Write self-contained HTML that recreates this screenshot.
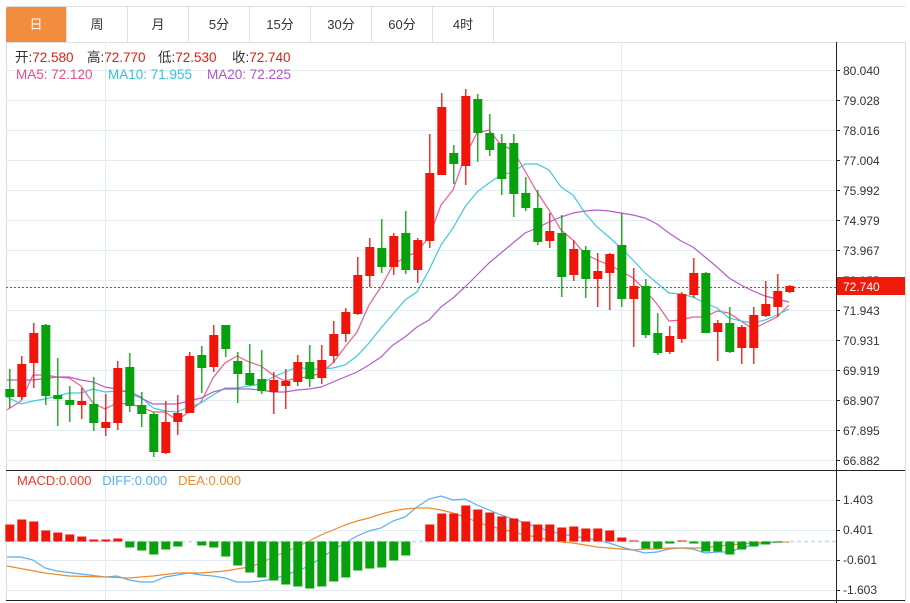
<!DOCTYPE html>
<html><head><meta charset="utf-8"><style>
body{margin:0;background:#fff;width:910px;height:603px;overflow:hidden;font-family:"Liberation Sans","Noto Sans CJK SC",sans-serif;}
.tabs{position:absolute;left:6px;top:6px;height:35px;width:899px;border-top:1px solid #e0e0e0;border-bottom:1px solid #e0e0e0;}
.tab{position:absolute;top:0;height:35px;width:60px;border-right:1px solid #e0e0e0;text-align:center;line-height:35px;font-size:13px;color:#333;}
.tab.on{background:#f28c3f;color:#fff;border-radius:2px 0 0 0;}
.leg{position:absolute;font-size:13.5px;line-height:16px;white-space:nowrap;}
svg{position:absolute;left:0;top:0;}
</style></head><body>
<div class="tabs">
<div class="tab on" style="left:0">日</div>
<div class="tab" style="left:61px">周</div>
<div class="tab" style="left:122px">月</div>
<div class="tab" style="left:183px">5分</div>
<div class="tab" style="left:244px">15分</div>
<div class="tab" style="left:305px">30分</div>
<div class="tab" style="left:366px">60分</div>
<div class="tab" style="left:427px">4时</div>
</div>
<svg id="s" width="910" height="603" xmlns="http://www.w3.org/2000/svg" font-family="Liberation Sans, sans-serif" font-size="12">
<g id="grid" stroke="#e3ecf3" stroke-width="1"></g>
<line x1="105.5" y1="42" x2="105.5" y2="600" stroke="#e3ecf3"/>
<line x1="621.5" y1="42" x2="621.5" y2="600" stroke="#e3ecf3"/>
<line x1="6.5" y1="42" x2="6.5" y2="600" stroke="#dcdcdc"/>
<line x1="905.5" y1="42" x2="905.5" y2="603" stroke="#dcdcdc"/>
<g id="lines" fill="none" stroke-width="1.2"></g>
<g id="cand"></g>
<g id="macd"></g>
<line x1="6" y1="287.5" x2="836" y2="287.5" stroke="#f5222d" stroke-dasharray="2,2"/>
<line x1="6" y1="470.5" x2="905" y2="470.5" stroke="#222"/>
<line x1="6" y1="600.5" x2="905" y2="600.5" stroke="#222"/>
<line x1="836.5" y1="42" x2="836.5" y2="603" stroke="#222"/>
<g fill="#333" font-size="12">
<text x="843" y="75">80.040</text><text x="843" y="105">79.028</text><text x="843" y="135">78.016</text><text x="843" y="165">77.004</text><text x="843" y="195">75.992</text><text x="843" y="225">74.979</text><text x="843" y="255">73.967</text><text x="843" y="285">72.955</text><text x="843" y="315">71.943</text><text x="843" y="345">70.931</text><text x="843" y="375">69.919</text><text x="843" y="405">68.907</text><text x="843" y="435">67.895</text><text x="843" y="465">66.882</text>
<text x="843" y="504">1.403</text><text x="843" y="534">0.401</text><text x="843" y="564">-0.601</text><text x="843" y="594">-1.603</text>
</g>
<g id="ticks" stroke="#222"></g>
<rect x="837" y="277" width="68" height="18" fill="#f01a0a"/>
<text x="843" y="291" fill="#fff" font-size="12">72.740</text>
</svg>
<div class="leg" style="left:15px;top:50px;color:#333">开:<span style="color:#f01a0a">72.580</span></div>
<div class="leg" style="left:87px;top:50px;color:#333">高:<span style="color:#f01a0a">72.770</span></div>
<div class="leg" style="left:158px;top:50px;color:#333">低:<span style="color:#f01a0a">72.530</span></div>
<div class="leg" style="left:232px;top:50px;color:#333">收:<span style="color:#f01a0a">72.740</span></div>
<div class="leg" style="left:16px;top:67px;color:#e94d86">MA5: 72.120</div>
<div class="leg" style="left:108px;top:67px;color:#32c3d6">MA10: 71.955</div>
<div class="leg" style="left:207px;top:67px;color:#b156c6">MA20: 72.225</div>
<div class="leg" style="left:17px;top:473px;font-size:13px"><span style="color:#f03a2a">MACD:0.000</span>&nbsp;&nbsp;&nbsp;<span style="color:#5aaef0">DIFF:0.000</span>&nbsp;&nbsp;&nbsp;<span style="color:#f08a2c">DEA:0.000</span></div>
<script>
var NS="http://www.w3.org/2000/svg";
function el(p,t,a){var e=document.createElementNS(NS,t);for(var k in a)e.setAttribute(k,a[k]);document.getElementById(p).appendChild(e);return e;}
for(var y=70.5;y<=461;y+=30)el("grid","line",{x1:6,y1:y,x2:836,y2:y});
[500.5,530.5,560.5,590.5].forEach(function(y){el("grid","line",{x1:6,y1:y,x2:836,y2:y});});
for(var y=70.5;y<=461;y+=30)el("ticks","line",{x1:836,y1:y,x2:840,y2:y});
[500.5,530.5,560.5,590.5].forEach(function(y){el("ticks","line",{x1:836,y1:y,x2:840,y2:y});});
var C=[
[389,397,369,408,0],[364,397,356,400,1],[333,363,323,388,1],[325,396,324,405,0],[395,399,358,426,0],[400,405,386,422,0],[401,405,388,419,1],[404,423,377,431,0],[422,428,394,436,1],[368,423,361,430,1],
[367,406,353,412,0],[405,414,392,427,0],[414,452,412,457,0],[422,453,401,454,1],[413,422,395,435,1],[356,413,352,413,1],[355,368,346,393,0],[335,367,325,372,1],[325,349,325,357,0],[361,374,352,403,0],
[373,385,344,386,0],[379,391,350,394,0],[380,392,372,414,1],[381,386,369,409,1],[362,382,355,386,1],[362,379,345,387,0],[360,378,345,384,1],[334,356,321,363,1],[312,334,308,342,1],[275,314,257,315,1],
[247,276,238,287,1],[248,267,219,273,0],[236,267,233,275,1],[233,270,211,274,0],[240,270,238,283,1],[173,241,134,248,1],[107,175,93,175,1],[153,164,145,184,0],[96,166,89,185,1],[99,133,94,162,0],
[133,150,114,156,0],[143,179,134,195,0],[143,194,134,217,0],[193,208,177,211,0],[208,242,190,245,0],[231,241,213,248,1],[233,277,215,297,0],[249,275,240,281,1],[250,279,246,298,0],[271,279,253,307,1],
[254,273,253,310,1],[245,299,213,307,0],[286,299,268,347,1],[286,335,279,338,0],[333,353,313,355,0],[336,352,326,354,1],[294,339,292,343,1],[273,295,258,298,1],[273,333,272,333,0],[323,332,320,361,1],
[323,352,307,353,0],[327,348,325,364,1],[315,348,307,364,1],[304,316,281,317,1],[291,307,274,317,1],[286,292,285,293,1]];
var M=[17,22,20,11,9,7,5,2,2,3,-6,-9,-13,-8,-5,0,-4,-6,-15,-24,-31,-36,-39,-43,-45,-47,-45,-40,-36,-29,-27,-26,-19,-14,0,17,28,28,36,32,29,25,23,20,17,17,14,15,13,13,11,4,1,-7,-7,-2,1,-2,-10,-10,-13,-8,-5,-3,-1,0];
function X(i){return 9.8+12*i;}
C.forEach(function(c,i){var col=c[4]?"#f0150a":"#07a10e",x=X(i);
el("cand","line",{x1:x,y1:c[2],x2:x,y2:c[3],stroke:col,"stroke-width":1.3});
el("cand","rect",{x:x-4.5,y:c[0],width:9,height:Math.max(1,c[1]-c[0]),fill:col});});
el("macd","line",{x1:6,y1:541.5,x2:836,y2:541.5,stroke:"#b8e0f0","stroke-dasharray":"4,3","stroke-width":1.5});
M.forEach(function(v,i){if(!v)return;var x=X(i);
el("macd","rect",{x:x-4.5,y:v>0?541.5-v:541.5,width:9,height:Math.abs(v),fill:v>0?"#f0150a":"#07a10e"});});
function pl(c,pts){el("lines","polyline",{points:pts,stroke:c});}
pl("#ee5a8e","7,410 21,401 33,375 45,375 57,377 69,378 81,386 93,403 105,409 117,403 129,404 141,407 153,412 165,412 177,420 189,412 201,402 213,378 225,363 237,356 249,362 261,366 273,375 285,381 297,378 309,377 321,373 333,363 345,347 357,332 369,305 381,287 393,265 405,257 417,252 429,237 441,205 453,190 465,156 477,133 489,130 501,145 513,150 525,171 537,192 549,210 561,230 573,240 585,254 597,260 609,265 621,271 633,278 645,290 657,304 669,321 681,320 693,317 705,317 717,311 729,313 741,321 753,329 765,323 777,317 789,305");
pl("#3fc9dd","7,397 21,404 33,401 45,399 57,396 69,393 81,393 93,389 105,392 117,391 129,391 141,397 153,408 165,411 177,412 189,407 201,403 213,395 225,388 237,388 249,386 261,384 273,377 285,372 297,367 309,369 321,369 333,368 345,365 357,356 369,343 381,328 393,314 405,300 417,292 429,270 441,245 453,228 465,207 477,192 489,183 501,175 513,172 525,164 537,164 549,170 561,187 573,195 585,213 597,227 609,237 621,248 633,260 645,273 657,283 669,293 681,294 693,297 705,303 717,308 729,318 741,321 753,323 765,320 777,315 789,309");
pl("#b55ec9","7,380 33,380 57,377 69,377 81,380 93,382 105,387 117,389 129,393 141,398 153,404 177,404 189,401 201,398 213,392 225,389 249,389 261,390 273,392 285,392 297,390 309,389 321,387 333,382 345,377 357,372 369,365 381,357 393,345 405,337 417,327 429,320 441,307 453,298 465,287 477,275 489,263 501,253 513,243 525,233 537,228 549,222 561,217 573,213 585,211 597,210 609,211 621,213 633,215 645,218 657,224 669,233 681,241 693,247 705,257 717,267 729,278 741,285 753,291 765,296 777,299 789,302");
pl("#5aaef0","7,557 21,557 33,560 45,568 57,571 81,574 105,577 117,576 129,580 141,582 153,582 165,577 177,575 189,573 201,575 213,576 225,578 237,582 249,582 261,581 273,579 285,575 297,571 309,566 321,558 333,550 345,543 357,536 369,531 381,528 393,521 405,517 417,507 429,499 441,496 453,500 465,499 477,505 489,510 501,515 513,519 525,523 537,527 549,531 561,534 573,536 585,538 597,540 609,543 621,547 633,550 645,553 657,552 669,549 681,548 693,549 705,553 717,552 729,552 741,548 753,545 765,543 777,542 789,542");
pl("#f08a2c","7,566 45,573 69,576 105,577 129,578 153,576 177,573 201,573 225,571 237,569 249,567 261,563 273,557 285,552 297,547 309,541 321,535 333,530 345,525 357,521 369,518 381,514 393,511 405,509 417,508 429,508 441,510 453,513 465,517 477,522 489,526 501,529 513,532 525,535 537,537 549,540 561,542 573,543 585,545 597,547 609,548 621,549 633,550 645,549 657,549 669,548 681,548 693,548 705,548 717,546 729,545 741,544 753,543 765,542 789,542");
</script>
</body></html>
